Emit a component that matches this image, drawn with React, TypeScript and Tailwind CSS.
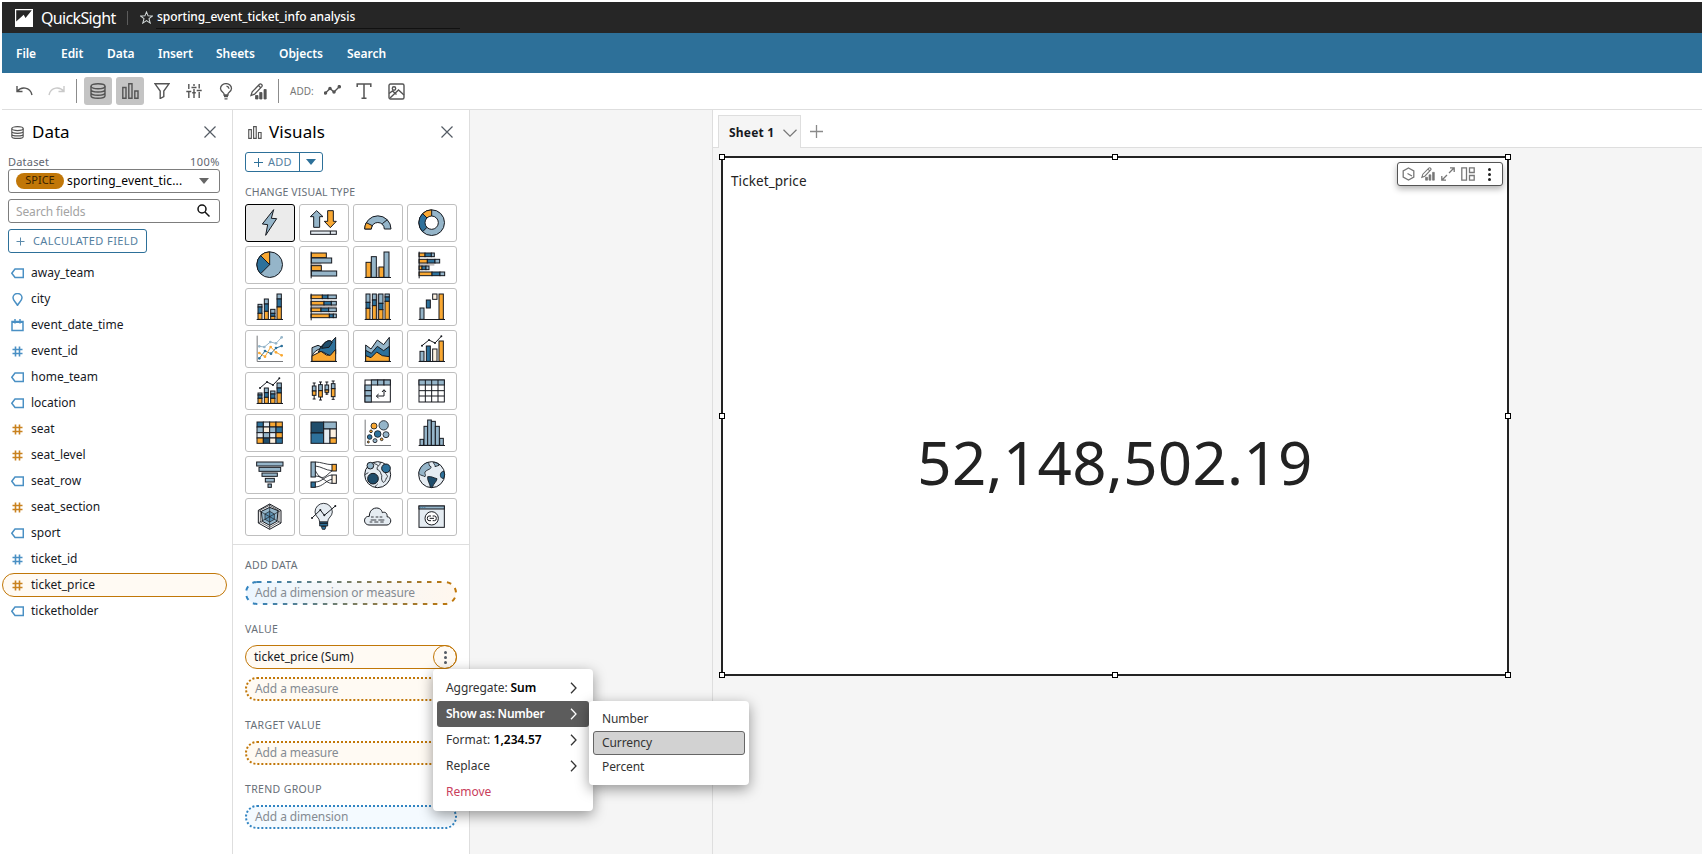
import React from "react";

const O = "#f9a832";
const L = "#95b5c9";
const D = "#2d719b";
const N = "#1f4d6b";
const W = "#e5ecf2";
const C = "#fdf1e0";
const K = "#16191f";

type Box = [number, number, number, number, string];

/* Rectangles given as x1, y1, x2, y2, fill. */
function Boxes({ b }: { b: Box[] }) {
  return (
    <>
      {b.map(([x1, y1, x2, y2, f], i) => (
        <rect key={i} x={x1} y={y1} width={x2 - x1} height={y2 - y1} fill={f} />
      ))}
    </>
  );
}

function Line({ p, c = K, r = 3 }: { p: number[][]; c?: string; r?: number }) {
  return (
    <g stroke={c}>
      <polyline points={p.map((q) => q.join(",")).join(" ")} fill="none" />
      {p.map(([x, y], i) => (
        <circle key={i} cx={x} cy={y} r={r} fill={c} stroke="none" />
      ))}
    </g>
  );
}

const baseline = <path d="M35 94.5H114" />;
const axes = <path d="M36.500 17V94.500H114" stroke="#77797c" fill="none" />;

const visualIcons: React.ReactNode[] = [
  <path d="M86 17 52 60 68 62 62 94 95 44 79 43Z" fill={L} />,
  <>
    <path d="M53 20 72 38H62V70H44V38H34Z" fill={L} />
    <path d="M86 20H103V52H112L94 71 76 52H86Z" fill={O} />
    <rect x="35" y="81" width="77" height="10" fill={W} />
    <path d="M94 81V91" />
  </>,
  <>
    <path d="M35 75A39.500 39.500 0 0 1 114 75H94A19.500 19.500 0 0 0 55 75Z" fill={L} />
    <path d="M35 75A39.500 39.500 0 0 1 40 56L58 65A19.500 19.500 0 0 0 55 75Z" fill={O} />
    <path d="M88 59 103 47" />
  </>,
  <>
    <circle cx="74" cy="56" r="38.500" fill={L} />
    <path d="M74 56 46.800 83.200A38.500 38.500 0 0 1 46.800 28.800Z" fill={D} />
    <path d="M74 56 46.800 28.800A38.500 38.500 0 0 1 74 17.500Z" fill={O} />
    <circle cx="74" cy="56" r="20" fill="#fff" />
  </>,
  <>
    <circle cx="74" cy="56" r="38.500" fill={L} />
    <path d="M74 56 46.800 83.200A38.500 38.500 0 0 1 46.800 28.800Z" fill={D} />
    <path d="M74 56 46.800 28.800A38.500 38.500 0 0 1 74 17.500Z" fill={O} />
  </>,
  <>
    <rect x="38" y="51" width="29" height="9" fill="#c0bcbc" stroke="none" />
    <Boxes b={[[37, 21, 82, 35, O], [37, 36, 98, 51, L], [37, 59, 67, 74, O], [37, 75, 113, 90, L]]} />
    <path d="M36.500 17V97" />
  </>,
  <>
    <rect x="70" y="63" width="8" height="30" fill="#c0bcbc" stroke="none" />
    <Boxes b={[[39, 49, 54, 94, O], [55, 32, 70, 94, L], [78, 63, 93, 94, O], [93, 18, 108, 94, L]]} />
    {baseline}
  </>,
  <>
    <rect x="37" y="52" width="45" height="7" fill="#c0bcbc" stroke="none" />
    <Boxes
      b={[
        [36, 21, 54, 32, O], [54, 21, 73, 32, D], [73, 21, 82, 32, L],
        [36, 40, 61, 51, O], [61, 40, 84, 51, D], [84, 40, 98, 51, L],
        [36, 60, 45, 71, O], [45, 60, 57, 71, D], [57, 60, 66, 71, L],
        [36, 78, 75, 89, O], [75, 78, 99, 89, D], [99, 78, 113, 89, L],
      ]}
    />
    <path d="M36.500 17V97" />
  </>,
  <>
    <Boxes
      b={[
        [39, 49, 51, 57, L], [39, 57, 51, 76, D], [39, 76, 51, 94, O],
        [58, 33, 70, 48, L], [58, 48, 70, 70, D], [58, 70, 70, 94, O],
        [77, 64, 90, 76, L], [77, 76, 90, 85, D], [77, 85, 90, 94, O],
        [96, 18, 109, 33, L], [96, 33, 109, 57, D], [96, 57, 109, 94, O],
      ]}
    />
    {baseline}
  </>,
  <>
    <rect x="37" y="52" width="76" height="7" fill="#c0bcbc" stroke="none" />
    <Boxes
      b={[
        [36, 21, 70, 32, O], [70, 21, 87, 32, D], [87, 21, 112, 32, L],
        [36, 40, 75, 51, O], [75, 40, 97, 51, D], [97, 40, 112, 51, L],
        [36, 60, 66, 71, O], [66, 60, 89, 71, D], [89, 60, 112, 71, L],
        [36, 78, 91, 89, O], [91, 78, 103, 89, D], [103, 78, 112, 89, L],
      ]}
    />
    <path d="M36.500 17V97" />
  </>,
  <>
    <rect x="70" y="18" width="8" height="76" fill="#c0bcbc" stroke="none" />
    <Boxes
      b={[
        [39, 18, 51, 43, L], [39, 43, 51, 61, D], [39, 61, 51, 94, O],
        [58, 18, 70, 36, L], [58, 36, 70, 53, D], [58, 53, 70, 94, O],
        [77, 18, 90, 46, L], [77, 46, 90, 65, D], [77, 65, 90, 94, O],
        [96, 18, 109, 27, L], [96, 27, 109, 40, D], [96, 40, 109, 94, O],
      ]}
    />
    {baseline}
  </>,
  <>
    <Boxes b={[[39, 60, 51, 94, L], [58, 36, 70, 60, D], [77, 18, 90, 34, C], [96, 18, 109, 94, O]]} />
    {baseline}
  </>,
  <>
    {axes}
    <Line c={L} r={4} p={[[43, 49], [58, 51], [76, 36], [93, 40], [110, 22]]} />
    <Line c={D} r={4} p={[[43, 85], [60, 63], [78, 71], [93, 54], [110, 48]]} />
    <Line c={O} r={4} p={[[43, 69], [60, 80], [77, 51], [93, 67], [110, 76]]} />
  </>,
  <>
    <path d="M39 53 57 46 66 50 58 66 39 78Z" fill={L} />
    <path d="M39 78C44 66 54 58 66 56V94H39Z" fill={C} />
    <path d="M58 66C72 36 88 27 98 35L110 22V72L94 78 72 66Z" fill={D} />
    <path d="M68 55C74 36 90 26 100 36L90 52Z" fill={N} />
    <path d="M39 94V78L66 64 82 75 94 76 110 58V94Z" fill={O} />
    {baseline}
  </>,
  <>
    <path d="M38 94V45L54 57 73 30 92 44 109 22V94Z" fill={L} />
    <path d="M38 94V61L55 70 73 49 92 62 109 49V94Z" fill={D} />
    <path d="M38 94V77L54 83 71 66 88 77 109 80V94Z" fill={O} />
    {baseline}
  </>,
  <>
    <Boxes b={[[39, 64, 51, 94, L], [58, 48, 70, 94, D], [77, 57, 90, 94, C], [96, 33, 109, 94, O]]} />
    {baseline}
    <Line p={[[45, 47], [66, 30], [84, 39], [103, 19]]} />
  </>,
  <>
    <Boxes
      b={[
        [39, 63, 51, 69, L], [39, 69, 51, 79, D], [39, 79, 51, 94, O],
        [58, 48, 70, 62, L], [58, 62, 70, 76, D], [58, 76, 70, 94, O],
        [77, 57, 90, 66, L], [77, 66, 90, 79, D], [77, 79, 90, 94, O],
        [96, 33, 109, 48, L], [96, 48, 109, 63, D], [96, 63, 109, 94, O],
      ]}
    />
    {baseline}
    <Line p={[[45, 48], [66, 30], [84, 39], [103, 19]]} />
  </>,
  <>
    <path d="M45.500 33V81M64.500 30V84M83.500 30V69M102.500 27V82M41 33H50M41 81H50M60 30H69M60 84H69M79 30H88M79 66H88M98 27H107M98 82H107" />
    <Boxes
      b={[
        [40, 42, 51, 57, L], [40, 57, 51, 70, O], [59, 38, 70, 56, L], [59, 56, 70, 75, O],
        [78, 39, 89, 54, L], [78, 54, 89, 61, O], [97, 35, 108, 50, L], [97, 50, 108, 74, O],
      ]}
    />
  </>,
  <>
    <Boxes b={[[36, 24, 112, 90, "#fff"], [55, 24, 74, 39, L], [74, 24, 93, 39, L], [93, 24, 112, 39, L], [36, 39, 55, 56, L], [36, 56, 55, 72, L], [36, 72, 55, 90, L]]} />
    <path d="M93 54V72H71M87 60 93 53 99 60M77 66 70 72 77 79" fill="none" />
  </>,
  <>
    <Boxes b={[[36, 24, 112, 90, "#fff"], [36, 24, 112, 39, L]]} />
    <path d="M55 24V90M74 24V90M93 24V90M36 56H112M36 72H112" />
  </>,
  <Boxes
    b={[
      [36, 24, 55, 39, D], [55, 24, 74, 39, W], [74, 24, 93, 39, O], [93, 24, 112, 39, O],
      [36, 39, 55, 56, L], [55, 39, 74, 56, C], [74, 39, 93, 56, L], [93, 39, 112, 56, D],
      [36, 56, 55, 72, W], [55, 56, 74, 72, L], [74, 56, 93, 72, W], [93, 56, 112, 72, O],
      [36, 72, 55, 88, O], [55, 72, 74, 88, N], [74, 72, 93, 88, C], [93, 72, 112, 88, D],
    ]}
  />,
  <Boxes b={[[36, 24, 74, 57, N], [74, 24, 112, 45, L], [36, 57, 74, 88, D], [74, 45, 93, 88, W], [93, 45, 112, 72, C], [93, 72, 112, 88, O]]} />,
  <>
    {axes}
    {([
      [63, 36, 9, O], [92, 34, 14, L], [54, 52, 4, O], [74, 60, 10, D], [99, 62, 9, L],
      [50, 69, 7, D], [66, 80, 6, L], [86, 76, 4, O], [46, 84, 3, O],
    ] as [number, number, number, string][]).map(([x, y, r, f], i) => (
      <circle key={i} cx={x} cy={y} r={r} fill={f} strokeWidth={2.5} />
    ))}
  </>,
  <>
    <Boxes b={[[39, 76, 50, 94, L], [51, 37, 62, 94, L], [62, 18, 73, 94, L], [73, 22, 85, 94, L], [85, 37, 97, 94, L], [98, 73, 109, 94, L]]} />
    {baseline}
  </>,
  <Boxes b={[[35, 18, 114, 30, L], [42, 34, 107, 46, L], [51, 51, 97, 61, L], [61, 67, 88, 78, L], [69, 84, 79, 94, L]]} />,
  <>
    <path d="M49 18C66 18 82 26 99 26M49 30C68 32 80 43 99 44M49 60C72 60 80 82 99 82M49 44C70 84 82 55 99 45M49 78C70 78 80 58 99 57M49 93C72 92 82 72 99 70" fill="none" strokeWidth={2.5} />
    <Boxes b={[[36, 18, 49, 63, L], [36, 78, 49, 94, D], [99, 25, 112, 45, O], [99, 57, 112, 82, C]]} />
  </>,
  <>
    <circle cx="74" cy="56" r="39" fill={W} />
    <path d="M63 18C60 26 72 22 76 30M82 19C84 28 70 30 72 40 80 44 82 46 84 54 90 60 82 66 88 76 92 84 98 74 100 66 108 62 100 56 96 50M74 84C70 88 66 90 68 95M36 56 46 50" fill="none" strokeWidth={2.5} />
    <circle cx="52" cy="29" r="10" fill={L} />
    <circle cx="99" cy="37" r="13" fill={D} />
    <circle cx="60" cy="68" r="16" fill={N} />
  </>,
  <>
    <circle cx="74" cy="56" r="39" fill={W} />
    <path d="M64 19C50 22 38 34 35 52 42 60 48 58 54 62 58 56 52 54 54 48 60 40 74 40 72 32 64 30 68 24 64 19ZM80 18C78 24 86 26 84 32L96 28 94 23Z" fill={L} strokeWidth={2.5} />
    <path d="M62 62C74 60 80 66 90 68 90 76 80 82 76 94L70 94C70 84 60 74 62 62Z" fill={N} strokeWidth={2.5} />
    <path d="M111 46C98 46 98 62 104 66L110 68Q115 56 111 46Z" fill={D} strokeWidth={2.5} />
  </>,
  <>
    <path d="M74 18 108 37V75L74 94 40 75V37Z" fill="#fff" />
    <path d="M74 28 99 38 96 70 74 82 52 70 49 40Z" fill={L} />
    <path d="M74 40 88 48V64L74 72 60 64V48Z" fill="#5f93b4" strokeWidth={2} />
    <path d="M74 18V94M40 37 108 75M108 37 40 75M46 36 74 22 102 38V72L74 88 46 72Z" fill="none" strokeWidth={2} />
  </>,
  <>
    <path d="M62 72C62 58 48 56 48 42A26 26 0 0 1 100 42C100 56 86 58 86 72Z" fill={W} strokeWidth={2.5} />
    <path d="M62 72H86V84H62ZM67 85H81L78 94H70Z" fill={D} strokeWidth={2.5} />
    <path d="M62 76H86" />
    <Line p={[[39, 60], [64, 36], [76, 52], [109, 24]]} />
  </>,
  <>
    <path d="M48 81C30 80 30 54 49 55 48 26 84 22 88 44 96 40 104 46 102 56 118 58 116 80 102 81Z" fill={W} />
    <path d="M54 57H62M68 57H76M80 57H88M53 66H70M76 66H94M50 72H58M64 72H76M82 72H92" strokeWidth={2.5} />
  </>,
  <>
    <Boxes b={[[36, 24, 112, 88, W], [36, 24, 112, 33, L]]} />
    <circle cx="74" cy="61" r="20" fill="#fff" />
    <path d="M72 54H66Q61 54 61 61T66 68H72M77 54H83Q88 54 88 61T83 68H77M68 61H81" fill="none" />
    <path d="M40 28H43M46 28H49M52 28H55" stroke={D} />
  </>,
];

function VisualGrid() {
  return (
    <div className="grid w-[212px] grid-cols-[repeat(4,50px)] gap-1">
      {visualIcons.map((icon, i) => (
        <button
          key={i}
          className={
            i === 0
              ? "h-[38px] w-[50px] rounded-[3px] border border-black bg-[#ebebeb]"
              : "h-[38px] w-[50px] rounded-[3px] border border-[#bfbfbf] bg-white"
          }
        >
          <svg viewBox="3 3 144 108" className="block h-9 w-12" stroke={K} strokeWidth={3}>
            {icon}
          </svg>
        </button>
      ))}
    </div>
  );
}

const DatabaseIcon = ({ className }: { className: string }) => (
  <svg viewBox="0 0 16 16" className={className} fill="none" stroke="currentColor" strokeWidth="1.400">
    <ellipse cx="8" cy="3.200" rx="7" ry="2.500" />
    <path d="M1 3.200V12.800C1 14.200 4 15.300 8 15.300S15 14.200 15 12.800V3.200M1 6.500C1 7.900 4 9 8 9S15 7.900 15 6.500M1 9.700C1 11.100 4 12.200 8 12.200S15 11.100 15 9.700" />
  </svg>
);

const BarsIcon = ({ className }: { className: string }) => (
  <svg viewBox="0 0 17 16" className={className} fill="none" stroke="currentColor" strokeWidth="1.400">
    <path d="M.8 4.500H4V15.200H.8ZM6.800 .8H10V15.200H6.800ZM12.800 8H16V15.200H12.800Z" />
  </svg>
);

const PencilChartIcon = ({ className }: { className: string }) => (
  <svg viewBox="0 0 17 17" className={className} fill="none" stroke="currentColor" strokeWidth="1.300">
    <path d="M1 12.500 2.200 8.800 9.500 1.300Q10.500.5 11.600 1.500T11.800 3.600L4.600 11.200ZM8.500 2.500 10.700 4.700" />
    <path d="M5.500 12.500H8V16H5.500ZM9.700 9.500H12V16H9.700ZM14 6.500H16.200V16H14Z" fill="currentColor" strokeWidth=".8" />
  </svg>
);

const CloseIcon = () => (
  <svg viewBox="0 0 12 12" className="h-3 w-3" stroke="#545b64" strokeWidth="1.200">
    <path d="M.5.5 11.500 11.500M11.500.5.5 11.500" />
  </svg>
);

function Header() {
  return (
    <header className="flex h-[31px] shrink-0 items-center bg-[#262626] text-white">
      <svg viewBox="0 0 18 18" className="ml-[13px] h-[18px] w-[18px]">
        <path d="M0 0H18V18H0Z" fill="#fff" />
        <path d="M1.200 1.200H16.800L10.500 9 8.700 5.800 1.200 12.500Z" fill="#262626" />
      </svg>
      <span className="ml-[8px] w-[74px] whitespace-nowrap text-[16px] tracking-[-0.65px]">QuickSight</span>
      <span className="ml-[12px] h-3.5 w-px bg-[#5c5c5c]" />
      <svg viewBox="0 0 14 14" className="ml-3 h-[13px] w-[13px]" fill="none" stroke="#d5dbdb" strokeWidth="1.100">
        <path d="M7 1 8.700 5.200 13.300 5.400 9.700 8.300 11 13 7 10.400 3 13 4.300 8.300.7 5.400 5.300 5.200Z" />
      </svg>
      <div className="ml-[3px] flex h-[22px] w-[304px] items-center whitespace-nowrap border-b border-[#111] pb-px pl-[1px] text-[12px] font-medium tracking-[-0.03px]">
        sporting_event_ticket_info analysis
      </div>
    </header>
  );
}

function MenuBar() {
  return (
    <nav className="flex h-10 shrink-0 items-center gap-[24px] bg-[#2d7099] pl-[14px] pt-[2px] text-[12px] font-semibold tracking-[-0.05px] text-white">
      <span className="w-[21px]">File</span>
      <span className="w-[22px]">Edit</span>
      <span className="w-[27px]">Data</span>
      <span className="w-[34px]">Insert</span>
      <span className="w-[39px]">Sheets</span>
      <span className="w-[44px]">Objects</span>
      <span>Search</span>
    </nav>
  );
}

const tool = "flex h-7 w-7 items-center justify-center rounded-[3px]";

function Toolbar() {
  return (
    <div className="flex h-[37px] shrink-0 items-center border-b border-[#dedede] bg-white pl-2 text-[#545454]">
      <div className="flex w-[66px] items-center gap-[15px] pl-[6px]">
        <svg viewBox="0 0 17 12" className="h-3 w-[17px]" fill="none" stroke="currentColor" strokeWidth="1.400">
          <path d="M1 1V6.500H6.500M1.300 6.300C5 1.500 14 1.500 16 10" />
        </svg>
        <svg viewBox="0 0 17 12" className="h-3 w-[17px]" fill="none" stroke="#c9c9c9" strokeWidth="1.400">
          <path d="M16 1V6.500H10.500M15.700 6.300C12 1.500 3 1.500 1 10" />
        </svg>
      </div>
      <span className="h-6 w-px bg-[#8c8c8c]" />
      <div className="ml-[7px] flex gap-1">
        <span className={tool + " bg-[#c4c4c4]"}><DatabaseIcon className="h-4 w-4" /></span>
        <span className={tool + " bg-[#c4c4c4]"}><BarsIcon className="h-4 w-[17px]" /></span>
        <span className={tool}>
          <svg viewBox="0 0 16 16" className="h-4 w-4" fill="none" stroke="currentColor" strokeWidth="1.400">
            <path d="M1 .8H15L9.800 8V13.500L6.200 15.500V8Z" />
          </svg>
        </span>
        <span className={tool}>
          <svg viewBox="0 0 16 16" className="h-4 w-4" fill="none" stroke="currentColor" strokeWidth="1.400">
            <path d="M2.800 1V6M8 1V3M13.200 1V5.500M2.800 9V15M8 6V15M13.200 9V15M.3 8.500H5.300M5.500 4.500H10.500M10.700 7.500H15.700M6.200 9.800H9.800" />
          </svg>
        </span>
        <span className={tool}>
          <svg viewBox="0 0 14 17" className="h-[17px] w-3.5" fill="none" stroke="currentColor" strokeWidth="1.300">
            <path d="M5 12V10.800C5 9.500 1.500 8.500 1.500 5.600A5.500 5 0 0 1 12.500 5.600C12.500 8.500 9 9.500 9 10.800V12ZM5 13.500H9M5.500 15.800H8.500M7.500 3.200Q9.800 3.600 10 5.800" />
          </svg>
        </span>
        <span className={tool}><PencilChartIcon className="h-[17px] w-[17px]" /></span>
      </div>
      <span className="ml-[6px] h-6 w-px bg-[#8c8c8c]" />
      <span className="ml-[11px] w-[28px] text-[10px] text-[#777]">ADD:</span>
      <div className="flex gap-1">
        <span className={tool}>
          <svg viewBox="0 0 17 10" className="mb-[2px] h-[10px] w-[17px]" stroke="currentColor" fill="currentColor" strokeWidth="1.300">
            <path d="M1.500 8 6 3.500 10 7 15.500 1.500" fill="none" />
            <circle cx="1.500" cy="8" r="1.100" /><circle cx="6" cy="3.500" r="1.100" /><circle cx="10" cy="7" r="1.100" /><circle cx="15.300" cy="1.700" r="1.100" />
          </svg>
        </span>
        <span className={tool}>
          <svg viewBox="0 0 16 16" className="h-4 w-4" fill="none" stroke="currentColor" strokeWidth="1.500">
            <path d="M1.200 4V1H14.800V4M8 1V15M5.500 15.200H10.500" />
          </svg>
        </span>
        <span className={tool}>
          <svg viewBox="0 0 17 17" className="h-[17px] w-[17px]" fill="none" stroke="currentColor" strokeWidth="1.400">
            <rect x="1" y="1" width="15" height="15" rx="1.500" />
            <circle cx="6" cy="5.500" r="1.700" />
            <path d="M2 15 10.500 7 16 12M1 10.500 4.500 8 8.500 11.500" />
          </svg>
        </span>
      </div>
    </div>
  );
}

type Kind = "tag" | "pin" | "date" | "num" | "measure";

function FieldIcon({ kind }: { kind: Kind }) {
  const color = kind === "measure" ? "#c9821f" : "#4a90c4";
  const paths: Record<Kind, string> = {
    tag: "M4 2H12.300V10.500H4L.8 6.200Z",
    pin: "M6.500 12.500C5 9.500 2 7.500 2 4.800A4.500 4.300 0 0 1 11 4.800C11 7.500 8 9.500 6.500 12.500Z",
    date: "M1 2.500H12V11.500H1ZM4 0V4.500M9 0V4.500M1 3.200H12",
    num: "M4.500 1.500V11.500M8.500 1.500V11.500M1.500 4.500H11.500M1.500 8.500H11.500",
    measure: "M4.500 1.500V11.500M8.500 1.500V11.500M1.500 4.500H11.500M1.500 8.500H11.500",
  };
  return (
    <svg viewBox="0 0 13 13" className="h-[13px] w-[13px]" fill="none" stroke={color} strokeWidth={kind === "num" || kind === "measure" ? 1.6 : 1.5}>
      <path d={paths[kind]} />
    </svg>
  );
}

const fields: [Kind, string][] = [
  ["tag", "away_team"],
  ["pin", "city"],
  ["date", "event_date_time"],
  ["num", "event_id"],
  ["tag", "home_team"],
  ["tag", "location"],
  ["measure", "seat"],
  ["measure", "seat_level"],
  ["tag", "seat_row"],
  ["measure", "seat_section"],
  ["tag", "sport"],
  ["num", "ticket_id"],
  ["measure", "ticket_price"],
  ["tag", "ticketholder"],
];

function DataPanel() {
  return (
    <aside className="flex w-[231px] shrink-0 flex-col border-r border-[#dedede] bg-white">
      <div className="mt-[8px] flex h-7 items-center pl-[9px] pr-[16px]">
        <DatabaseIcon className="h-[13px] w-[13px] text-[#545454]" />
        <h2 className="ml-[8px] flex-1 text-[17px] text-black">Data</h2>
        <CloseIcon />
      </div>
      <div className="flex flex-col pl-[6px] pr-[12px]">
        <div className="mt-[8px] flex h-4 items-center justify-between text-[11px] text-[#5f6670]">
          <span className="tracking-[0.2px]">Dataset</span>
          <span className="tracking-[0.5px]">100%</span>
        </div>
        <div className="mt-[-1px] flex h-6 w-[212px] items-center rounded-[3px] border border-[#7d7d7d] pl-[7px] pr-[10px]">
          <span className="mb-px flex h-4 w-12 items-center justify-center rounded-full bg-[#c17708] text-[11px] text-[#3a2300]">SPICE</span>
          <span className="ml-[3px] flex-1 whitespace-nowrap text-[12px] tracking-[0.15px]">sporting_event_tic...</span>
          <svg viewBox="0 0 10 6" className="h-[6px] w-[10px]"><path d="M0 0H10L5 6Z" fill="#666" /></svg>
        </div>
        <div className="mt-[6px] flex h-6 w-[212px] items-center justify-between rounded-[3px] border border-[#7d7d7d] pl-[7px] pr-[9px] pt-px text-[12px] tracking-[-0.15px] text-[#a3a3a3]">
          <span>Search fields</span>
          <svg viewBox="0 0 13 13" className="mb-[2px] h-[13px] w-[13px]" fill="none" stroke="#111" strokeWidth="1.500">
            <circle cx="5" cy="5" r="4" /><path d="M8 8 12.500 12.500" />
          </svg>
        </div>
        <div className="mt-[6px] flex h-6 w-[139px] items-center rounded-[3px] border border-[#2d7099] pl-[7px] text-[11px] text-[#5480a0]">
          <svg viewBox="0 0 9 9" className="h-[9px] w-[9px]" stroke="#5b8aab"><path d="M4.500 .5V8.500M.5 4.500H8.500" /></svg>
          <span className="ml-[8px] whitespace-nowrap tracking-[0.4px]">CALCULATED FIELD</span>
        </div>
      </div>
      <ul className="mt-[8px] flex flex-col gap-[2px] text-[12px] tracking-[0px] text-[#16191f]">
        {fields.map(([kind, name]) => (
          <li
            key={name}
            className={
              name === "ticket_price"
                ? "flex h-6 w-[225px] items-center gap-[6px] rounded-full border border-[#c17708] bg-[#fffaf3] pl-[8px]"
                : "flex h-6 items-center gap-[6px] pl-[9px]"
            }
          >
            <FieldIcon kind={kind} />
            <span className="pl-px">{name}</span>
          </li>
        ))}
      </ul>
    </aside>
  );
}

/* Pill-shaped drop target with a dotted or dashed outline. */
function Well({ text, tone }: { text: string; tone: "both" | "measure" | "dimension" }) {
  const stroke = tone === "both" ? "url(#wellStroke)" : tone === "measure" ? "#c17708" : "#3184c2";
  const fill = tone === "both" ? "url(#wellFill)" : tone === "measure" ? "#fffaf3" : "#f4faff";
  return (
    <div className="relative flex h-6 w-[212px] items-center pl-[10px] text-[12px] tracking-[-0.1px] text-[#858b92]">
      <svg viewBox="0 0 212 24" className="absolute inset-0 h-6 w-[212px]">
        <defs>
          <linearGradient id="wellStroke"><stop stopColor="#3184c2" /><stop offset="1" stopColor="#c17708" /></linearGradient>
          <linearGradient id="wellFill"><stop stopColor="#ecf6ff" /><stop offset="1" stopColor="#fff7ee" /></linearGradient>
        </defs>
        <rect x="1" y="1" width="210" height="22" rx="11" fill={fill} stroke={stroke} strokeWidth="2" strokeDasharray={tone === "both" ? "4.500 5.500" : "2 2"} />
      </svg>
      <span className="relative">{text}</span>
    </div>
  );
}

const label = "text-[10.500px] leading-4 tracking-[0.35px] text-[#687078]";

function VisualsPanel() {
  return (
    <aside className="flex w-[237px] shrink-0 flex-col border-r border-[#dedede] bg-white">
      <div className="mt-[8px] flex h-7 items-center pl-[15px] pr-[16px]">
        <BarsIcon className="h-[13px] w-[14px] text-[#545454]" />
        <h2 className="ml-[7px] flex-1 text-[17px] tracking-[0.1px] text-black">Visuals</h2>
        <CloseIcon />
      </div>
      <div className="ml-[12px] mt-[6px] flex h-5 w-[78px] items-center rounded-[3px] border border-[#2d7099] text-[11px] text-[#5480a0]">
        <div className="flex h-full w-[54px] items-center border-r border-[#2d7099] pl-2">
          <svg viewBox="0 0 9 9" className="h-[9px] w-[9px]" stroke="#2d7099"><path d="M4.500 0V9M0 4.500H9" /></svg>
          <span className="ml-[5px] tracking-[0.2px]">ADD</span>
        </div>
        <svg viewBox="0 0 10 6" className="ml-[6px] h-[6px] w-[10px]"><path d="M0 0H10L5 6Z" fill="#2d7099" /></svg>
      </div>
      <div className={"mt-[12px] pl-[12px] " + label}><span className="tracking-[0.15px]">CHANGE VISUAL TYPE</span></div>
      <div className="mt-[4px] pl-[12px]"><VisualGrid /></div>
      <div className="mt-2 flex flex-col border-t border-[#dedede] pl-[12px] pt-[12px]">
        <div className={label}>ADD DATA</div>
        <div className="mt-2"><Well tone="both" text="Add a dimension or measure" /></div>
        <div className={"mt-4 " + label}>VALUE</div>
        <div className="mt-2 flex h-6 w-[212px] items-center justify-between rounded-full border border-[#c17708] bg-[#fffaf3] pl-2 text-[12px] text-[#16191f]">
          <span>ticket_price (Sum)</span>
          <span className="-mr-px flex h-6 w-6 flex-col items-center justify-center gap-[2px] rounded-full border border-[#c17708]">
            <i className="h-[3px] w-[3px] rounded-full bg-[#545b64]" />
            <i className="h-[3px] w-[3px] rounded-full bg-[#545b64]" />
            <i className="h-[3px] w-[3px] rounded-full bg-[#545b64]" />
          </span>
        </div>
        <div className="mt-2"><Well tone="measure" text="Add a measure" /></div>
        <div className={"mt-4 " + label}>TARGET VALUE</div>
        <div className="mt-2"><Well tone="measure" text="Add a measure" /></div>
        <div className={"mt-4 " + label}>TREND GROUP</div>
        <div className="mt-2"><Well tone="dimension" text="Add a dimension" /></div>
      </div>
    </aside>
  );
}

const handles = [
  "-left-1 -top-1", "left-[389px] -top-1", "-right-1 -top-1",
  "-left-1 top-[255px]", "-right-1 top-[255px]",
  "-left-1 -bottom-1", "left-[389px] -bottom-1", "-right-1 -bottom-1",
];

function SheetArea() {
  return (
    <main className="flex flex-1 flex-col border-l border-[#dedede] bg-[#f5f5f5]">
      <div className="flex h-[38px] shrink-0 items-end border-b border-[#dedede] bg-white pl-[5px]">
        <div className="-mb-px flex h-[33px] w-[83px] items-center border border-b-0 border-[#dedede] bg-[#f5f5f5] pl-[10px] pt-px text-[12px] font-bold text-[#16191f]">
          <span className="w-[46px] whitespace-nowrap tracking-[0.2px]">Sheet 1</span>
          <svg viewBox="0 0 14 8" className="ml-[8px] h-2 w-3.5" fill="none" stroke="#777" strokeWidth="1.200"><path d="M.5.8 7 7.200 13.500.8" /></svg>
        </div>
        <svg viewBox="0 0 13 13" className="mb-[9px] ml-[9px] h-[13px] w-[13px]" stroke="#8a8a8a" strokeWidth="1.300"><path d="M6.500 0V13M0 6.500H13" /></svg>
      </div>
      <section className="relative ml-2 mt-2 flex h-[520px] w-[788px] flex-col border-2 border-[#232323] bg-white">
        {handles.map((h) => (
          <i key={h} className={"absolute h-[6px] w-[6px] border border-black bg-white " + h} />
        ))}
        <h3 className="ml-2 mt-[13px] text-[13.500px] leading-5 tracking-[0.08px] text-[#232323]">Ticket_price</h3>
        <div className="absolute right-1 top-1 flex h-6 w-[106px] items-center rounded-[3px] border border-[#545454] bg-white pl-1 text-[#777] shadow-[0_3px_6px_rgba(0,0,0,0.3)]">
          <svg viewBox="0 0 13 14" className="h-3.5 w-[13px]" fill="none" stroke="currentColor" strokeWidth="1.300">
            <path d="M6.500 1 11.800 4V10L6.500 13 1.200 10V4ZM5.500 6.500 10 9" />
          </svg>
          <PencilChartIcon className="ml-[6px] h-[14px] w-[14px]" />
          <svg viewBox="0 0 14 14" className="ml-[6px] h-3.5 w-3.5" fill="none" stroke="currentColor" strokeWidth="1.300">
            <path d="M8 6 13 1M9 .8H13.200V5M6 8 1 13M.8 9V13.200H5" />
          </svg>
          <svg viewBox="0 0 14 14" className="ml-[6px] h-3.5 w-3.5" fill="none" stroke="currentColor" strokeWidth="1.300">
            <path d="M.8.8H5.500V13.200H.8ZM8.500.8H13.200V5.500H8.500ZM8.500 8.500H13.200V13.200H8.500Z" />
          </svg>
          <span className="ml-[13px] flex flex-col gap-[2px]">
            <i className="h-[3px] w-[3px] rounded-full bg-[#222]" />
            <i className="h-[3px] w-[3px] rounded-full bg-[#222]" />
            <i className="h-[3px] w-[3px] rounded-full bg-[#222]" />
          </span>
        </div>
        <div className="flex flex-1 items-center justify-center pt-[58px] text-[60px] leading-none tracking-[0.3px] text-[#222]">
          52,148,502.19
        </div>
      </section>
    </main>
  );
}

const Chevron = () => (
  <svg viewBox="0 0 7 12" className="h-3 w-[7px]" fill="none" stroke="currentColor" strokeWidth="1.300">
    <path d="M1 .8 6 6 1 11.200" />
  </svg>
);

function ContextMenu() {
  const row = "flex h-[26px] items-center justify-between rounded-[3px] pl-[9px] pr-[12px] whitespace-nowrap";
  return (
    <>
      <div className="absolute left-[433px] top-[669px] flex h-[142px] w-[160px] flex-col rounded-[4px] bg-white px-1 pt-[6px] text-[12px] text-[#333] shadow-[0_4px_14px_rgba(0,0,0,0.4)]">
        <div className={row}><span className="tracking-[-0.08px]">Aggregate: <b className="font-semibold text-black">Sum</b></span><Chevron /></div>
        <div className={row + " bg-[#5c5c5c] font-semibold text-white"}><span className="tracking-[-0.25px]">Show as: Number</span><Chevron /></div>
        <div className={row}><span className="tracking-[0.05px]">Format: <b className="font-semibold text-black">1,234.57</b></span><Chevron /></div>
        <div className={row}><span>Replace</span><Chevron /></div>
        <div className={row + " text-[#c9405c]"}>Remove</div>
      </div>
      <div className="absolute left-[589px] top-[701px] flex h-[84px] w-[160px] flex-col rounded-[4px] bg-white px-1 pt-[6px] text-[12px] text-[#333] tracking-[-0.1px] shadow-[0_4px_14px_rgba(0,0,0,0.4)]">
        <div className="flex h-6 items-center pl-[9px]">Number</div>
        <div className="flex h-6 items-center rounded-[3px] border border-[#666] bg-[#d2d2d2] pl-2">Currency</div>
        <div className="flex h-6 items-center pl-[9px]">Percent</div>
      </div>
    </>
  );
}

export default function App() {
  return (
    <div className="relative flex h-[856px] w-[1704px] flex-col overflow-hidden bg-white p-[2px] font-['Noto_Sans','Open_Sans',sans-serif]">
      <Header />
      <MenuBar />
      <Toolbar />
      <div className="flex min-h-0 flex-1">
        <DataPanel />
        <VisualsPanel />
        <div className="w-[242px] shrink-0 bg-[#f5f5f5]" />
        <SheetArea />
      </div>
      <ContextMenu />
    </div>
  );
}
